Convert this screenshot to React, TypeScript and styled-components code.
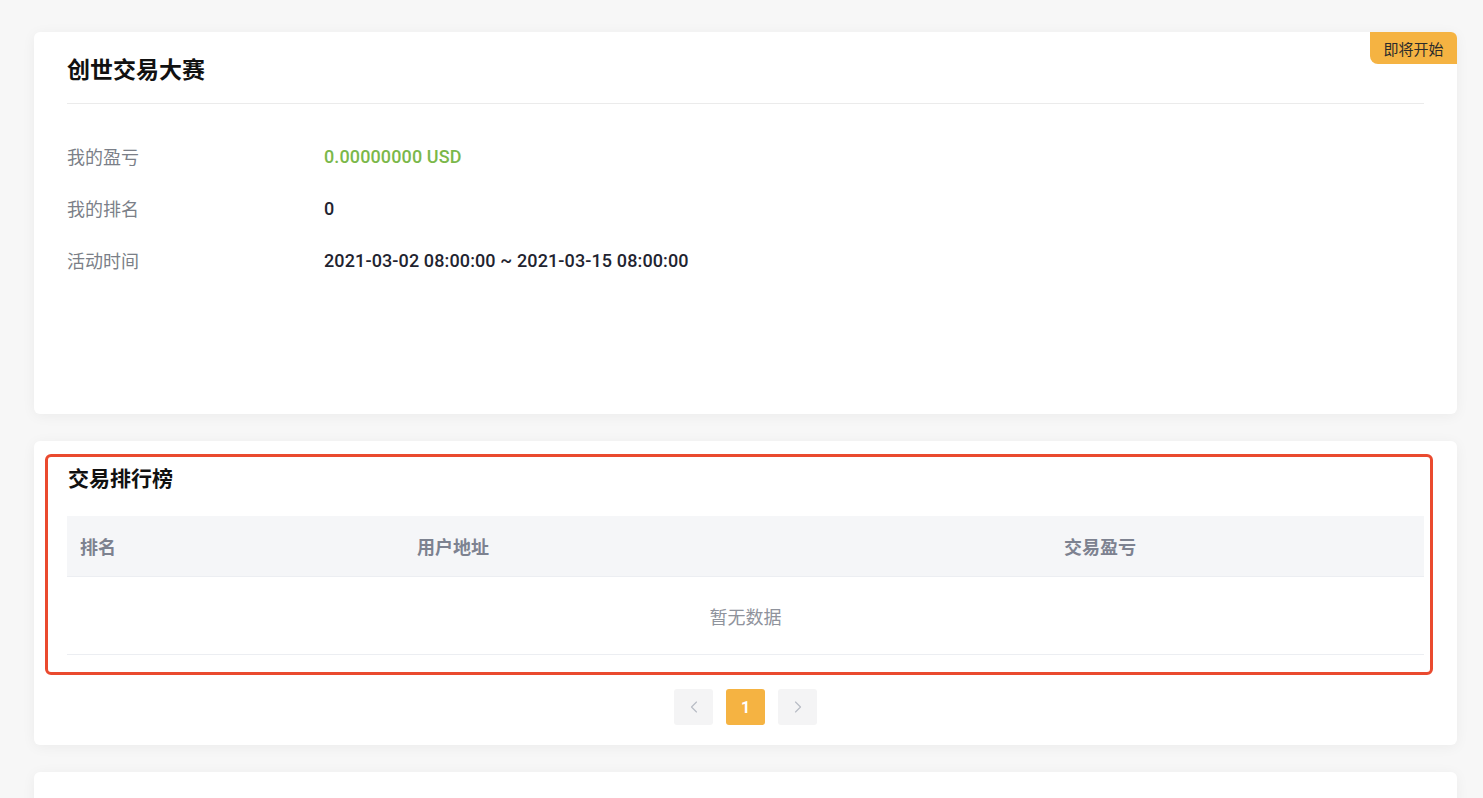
import React from 'react';
import styled, { createGlobalStyle } from 'styled-components';
import { ChevronLeft, ChevronRight } from 'lucide-react';

const GlobalStyle = createGlobalStyle`
  html, body {
    margin: 0;
    padding: 0;
    background: #f7f7f7;
    font-family: Roboto, "Noto Sans CJK SC", "Noto Sans", sans-serif;
    color: #1f2430;
  }
  * { box-sizing: border-box; }
`;

const Page = styled.div`
  padding: 32px 26px 0 34px;
  display: flex;
  flex-direction: column;
  gap: 27px;
  height: 798px;
  overflow: hidden;
`;

const Card = styled.section<{ $height?: number }>`
  position: relative;
  background: #fff;
  border-radius: 6px;
  box-shadow: 0 2px 14px rgba(0, 0, 0, 0.05);
  flex-shrink: 0;
  ${(p) => (p.$height ? `height: ${p.$height}px;` : '')}
`;

const Badge = styled.div`
  position: absolute;
  top: 0;
  right: 0;
  width: 87px;
  height: 32px;
  display: flex;
  align-items: center;
  justify-content: center;
  background: #f5b342;
  color: #2b2b2b;
  font-family: "Noto Sans CJK SC", sans-serif;
  font-size: 15px;
  border-radius: 0 6px 0 8px;
`;

const InfoBody = styled.div`
  padding: 0 33px;
`;

const CardHeader = styled.div`
  height: 72px;
  display: flex;
  align-items: center;
  border-bottom: 1px solid #ebebeb;
  padding-top: 1px;
`;

const Title = styled.h1`
  margin: 0;
  font-family: "Noto Sans CJK SC", sans-serif;
  font-size: 23px;
  font-weight: 700;
  color: #111;
`;

const InfoList = styled.div`
  padding: 26px 0 128px;
  display: flex;
  flex-direction: column;
`;

const InfoRow = styled.div`
  height: 52px;
  display: grid;
  grid-template-columns: 257px 1fr;
  align-items: center;
`;

const Label = styled.span`
  font-family: "Noto Sans CJK SC", sans-serif;
  font-size: 18px;
  color: #7b7f88;
`;

const Value = styled.span<{ $green?: boolean }>`
  font-family: Roboto, "Noto Sans CJK SC", sans-serif;
  font-size: 18px;
  font-weight: 500;
  letter-spacing: 0.12px;
  color: ${(p) => (p.$green ? '#7bb84a' : '#1f2430')};
`;

const RankBody = styled.div`
  padding: 13px 24px 20px 11px;
  display: flex;
  flex-direction: column;
`;

const Highlight = styled.div`
  border: 3px solid #ea4a2f;
  border-radius: 6px;
  padding: 5px 6px 17px 19px;
`;

const SectionTitle = styled.h2`
  margin: 0 0 24px 1px;
  font-family: "Noto Sans CJK SC", sans-serif;
  font-size: 21px;
  line-height: 30px;
  font-weight: 700;
  color: #111;
`;

const Grid = styled.div`
  display: grid;
  grid-template-columns: 337fr 647fr 373fr;
`;

const HeadRow = styled(Grid)`
  height: 61px;
  background: #f5f6f8;
  border-bottom: 1px solid #eceef2;
  align-items: center;
`;

const HeadCell = styled.div`
  padding-left: 13px;
  font-family: "Noto Sans CJK SC", sans-serif;
  font-size: 18px;
  font-weight: 700;
  color: #7d8290;
`;

const Empty = styled.div`
  height: 78px;
  display: flex;
  align-items: center;
  justify-content: center;
  border-bottom: 1px solid #eceef2;
  font-family: "Noto Sans CJK SC", sans-serif;
  font-size: 18px;
  color: #8f939c;
`;

const Pager = styled.div`
  margin-top: 14px;
  display: flex;
  justify-content: center;
  gap: 13px;
  padding-left: 13px;
`;

const PageButton = styled.button<{ $active?: boolean }>`
  width: 39px;
  height: 36px;
  border: none;
  border-radius: 3px;
  display: flex;
  align-items: center;
  justify-content: center;
  padding: 0;
  background: ${(p) => (p.$active ? '#f5b342' : '#f4f4f5')};
  color: ${(p) => (p.$active ? '#fff' : '#b8bcc4')};
  font-family: Roboto, sans-serif;
  font-size: 16px;
  font-weight: 700;
`;

const LowerTitle = styled.h2`
  margin: 0;
  padding: 22px 33px;
  font-family: "Noto Sans CJK SC", sans-serif;
  font-size: 21px;
  color: #111;
`;

const infoRows = [
  { label: '我的盈亏', value: '0.00000000 USD', green: true },
  { label: '我的排名', value: '0' },
  { label: '活动时间', value: '2021-03-02 08:00:00 ~ 2021-03-15 08:00:00' },
];

export default function App() {
  return (
    <>
      <GlobalStyle />
      <Page>
        <Card>
          <Badge>即将开始</Badge>
          <InfoBody>
            <CardHeader>
              <Title>创世交易大赛</Title>
            </CardHeader>
            <InfoList>
              {infoRows.map((r) => (
                <InfoRow key={r.label}>
                  <Label>{r.label}</Label>
                  <Value $green={r.green}>{r.value}</Value>
                </InfoRow>
              ))}
            </InfoList>
          </InfoBody>
        </Card>

        <Card>
          <RankBody>
            <Highlight>
              <SectionTitle>交易排行榜</SectionTitle>
              <HeadRow>
                <HeadCell>排名</HeadCell>
                <HeadCell>用户地址</HeadCell>
                <HeadCell>交易盈亏</HeadCell>
              </HeadRow>
              <Empty>暂无数据</Empty>
            </Highlight>
            <Pager>
              <PageButton aria-label="prev">
                <ChevronLeft size={20} strokeWidth={1.4} />
              </PageButton>
              <PageButton $active>1</PageButton>
              <PageButton aria-label="next">
                <ChevronRight size={20} strokeWidth={1.4} />
              </PageButton>
            </Pager>
          </RankBody>
        </Card>

        <Card $height={240}>
          <LowerTitle>活动规则</LowerTitle>
        </Card>
      </Page>
    </>
  );
}
